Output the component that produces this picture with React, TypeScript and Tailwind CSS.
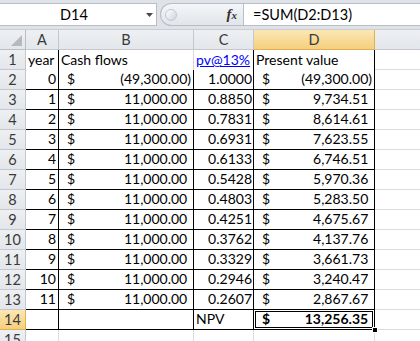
import React from 'react';

const cellFont = { fontFamily: 'Lato, "Liberation Sans", sans-serif' };

type Row = { year: string; cash: string; pv: string; val: string };

const rows: Row[] = [
  { year: '0', cash: '(49,300.00)', pv: '1.0000', val: '(49,300.00)' },
  { year: '1', cash: '11,000.00', pv: '0.8850', val: '9,734.51' },
  { year: '2', cash: '11,000.00', pv: '0.7831', val: '8,614.61' },
  { year: '3', cash: '11,000.00', pv: '0.6931', val: '7,623.55' },
  { year: '4', cash: '11,000.00', pv: '0.6133', val: '6,746.51' },
  { year: '5', cash: '11,000.00', pv: '0.5428', val: '5,970.36' },
  { year: '6', cash: '11,000.00', pv: '0.4803', val: '5,283.50' },
  { year: '7', cash: '11,000.00', pv: '0.4251', val: '4,675.67' },
  { year: '8', cash: '11,000.00', pv: '0.3762', val: '4,137.76' },
  { year: '9', cash: '11,000.00', pv: '0.3329', val: '3,661.73' },
  { year: '10', cash: '11,000.00', pv: '0.2946', val: '3,240.47' },
  { year: '11', cash: '11,000.00', pv: '0.2607', val: '2,867.67' },
];

function RowHead({ n, active }: { n: number; active?: boolean }) {
  return (
    <div
      className={`w-[26px] shrink-0 h-full flex items-center justify-center border-r border-b text-[14.5px] ${
        active
          ? 'bg-linear-to-b from-[#fbe7b4] to-[#f6cf7c] border-[#e2b14f] text-[#3a3a3a]'
          : 'bg-linear-to-b from-[#eef0f3] to-[#e3e6ea] border-[#c3c8ce] text-[#3a3a3a]'
      }`}
    >
      {n}
    </div>
  );
}

// accounting format: "$" on the left, number right, room kept for ")"
function Money({ v, bold }: { v: string; bold?: boolean }) {
  const neg = v.startsWith('(');
  return (
    <>
      <span className={bold ? 'font-bold' : ''}>$</span>
      <span className={bold ? 'font-bold' : ''}>
        {v}
        {!neg && <span className="invisible">)</span>}
      </span>
    </>
  );
}

export default function App() {
  return (
    <div className="w-[420px] h-[341px] overflow-hidden bg-white text-[14px] text-black" style={cellFont}>
      {/* Formula bar */}
      <div className="h-[30px] bg-[#dfe3e8] flex items-start pt-[3px] border-b border-[#c9ced5]">
        <div className="w-[157px] h-[23px] bg-white border-y border-r border-[#b7bec8] flex items-center">
          <span className="flex-1 text-center pl-[2px] text-[14.5px]">D14</span>
          <svg width="7" height="4" viewBox="0 0 7 4" className="mr-[3px]">
            <path d="M0 0 H7 L3.5 4 Z" fill="#4a4a4a" />
          </svg>
        </div>
        <div className="ml-[3px] w-[83px] h-[23px] flex items-center rounded-l-[12px] border-l border-y border-[#b7bec8] bg-linear-to-b from-[#f4f6f8] to-[#e2e5e9]">
          <div className="ml-[4px] w-[12px] h-[12px] rounded-full border border-[#c3c8cf] bg-linear-to-br from-white to-[#cfd4da]" />
          <span className="ml-auto mr-[6px] italic font-bold text-[#333]" style={{ fontFamily: '"Liberation Serif", serif' }}>
            <span className="text-[15px]">f</span>
            <span className="text-[11px]">x</span>
          </span>
        </div>
        <div className="flex-1 h-[23px] bg-white border-y border-l border-[#b7bec8] flex items-center pl-[9px] text-[14.5px]">
          =SUM(D2:D13)
        </div>
      </div>

      {/* Column headers */}
      <div className="flex h-[20px] text-[#3a3a3a] text-[14.5px]">
        <div className="w-[26px] shrink-0 border-r border-b border-[#b9bec5] bg-linear-to-b from-[#eef0f3] to-[#e3e6ea] flex items-end justify-end p-[3px]">
          <svg width="11" height="11" viewBox="0 0 11 11">
            <path d="M11 0 V11 H0 Z" fill="#b5bac1" />
          </svg>
        </div>
        <div className="w-[33px] shrink-0 flex items-center justify-center border-r border-b border-[#c3c8ce] bg-linear-to-b from-[#eef0f3] to-[#e3e6ea]">A</div>
        <div className="w-[135px] shrink-0 flex items-center justify-center border-r border-b border-[#c3c8ce] bg-linear-to-b from-[#eef0f3] to-[#e3e6ea]">B</div>
        <div className="w-[60px] shrink-0 flex items-center justify-center border-r border-b border-[#c3c8ce] bg-linear-to-b from-[#eef0f3] to-[#e3e6ea]">C</div>
        <div className="w-[121px] shrink-0 flex items-center justify-center border-r border-b border-[#e2b14f] bg-linear-to-b from-[#fbe7b4] to-[#f6cf7c]">D</div>
        <div className="flex-1 border-b border-[#c3c8ce] bg-linear-to-b from-[#eef0f3] to-[#e3e6ea]" />
      </div>

      {/* Row 1 */}
      <div className="flex h-[20px]">
        <RowHead n={1} />
        <div className="w-[33px] shrink-0 border-r border-black flex items-end pl-[2px] pb-[2px] leading-[16px]">year</div>
        <div className="w-[135px] shrink-0 border-r border-[#d4d7db] flex items-end pl-[2px] pb-[2px] leading-[16px]">Cash flows</div>
        <div className="w-[60px] shrink-0 border-r border-black flex items-end pl-[2px] pb-[2px] leading-[16px]">
          <span className="text-[#0000ff] underline">pv@13%</span>
        </div>
        <div className="w-[121px] shrink-0 border-r border-black flex items-end pl-[2px] pb-[2px] leading-[16px]">Present value</div>
        <div className="flex-1 border-b border-[#dadcdd]" />
      </div>

      {/* Rows 2-13 */}
      {rows.map((r, i) => (
        <div key={i} className="flex h-[20px]">
          <RowHead n={i + 2} />
          <div className="w-[33px] shrink-0 border-r border-b border-black flex items-end justify-end pr-[2px] pb-[2px] leading-[16px]">{r.year}</div>
          <div className="w-[135px] shrink-0 border-r border-b border-black flex items-end justify-between pl-[8px] pr-[2px] pb-[2px] leading-[16px]">
            <Money v={r.cash} />
          </div>
          <div className="w-[60px] shrink-0 border-r border-b border-black flex items-end justify-end pr-[1px] pb-[2px] leading-[16px]">{r.pv}</div>
          <div className="w-[121px] shrink-0 border-r border-b border-black flex items-end justify-between pl-[8px] pr-[2px] pb-[2px] leading-[16px]">
            <Money v={r.val} />
          </div>
          <div className="flex-1 border-b border-[#dadcdd]" />
        </div>
      ))}

      {/* Row 14 */}
      <div className="flex h-[20px]">
        <RowHead n={14} active />
        <div className="w-[33px] shrink-0 border-r border-b border-black" />
        <div className="w-[135px] shrink-0 border-r border-b border-black" />
        <div className="w-[60px] shrink-0 border-r border-b border-black flex items-end pl-[2px] pb-[2px] leading-[16px]">NPV</div>
        <div className="relative w-[121px] shrink-0 border-r border-b border-black flex items-end justify-between pl-[8px] pr-[2px] pb-[2px] leading-[16px]">
          <Money v="13,256.35" bold />
          <div className="absolute inset-[1px] border border-black pointer-events-none" />
          <div className="absolute right-[-4px] bottom-[-4px] w-[6px] h-[6px] bg-black border border-white" />
        </div>
        <div className="flex-1 border-b border-[#dadcdd]" />
      </div>

      {/* Row 15 (partial) */}
      <div className="flex h-[20px]">
        <RowHead n={15} />
        <div className="w-[33px] shrink-0 border-r border-b border-[#dadcdd]" />
        <div className="w-[135px] shrink-0 border-r border-b border-[#dadcdd]" />
        <div className="w-[60px] shrink-0 border-r border-b border-[#dadcdd]" />
        <div className="w-[121px] shrink-0 border-r border-b border-[#dadcdd]" />
        <div className="flex-1 border-b border-[#dadcdd]" />
      </div>
    </div>
  );
}
